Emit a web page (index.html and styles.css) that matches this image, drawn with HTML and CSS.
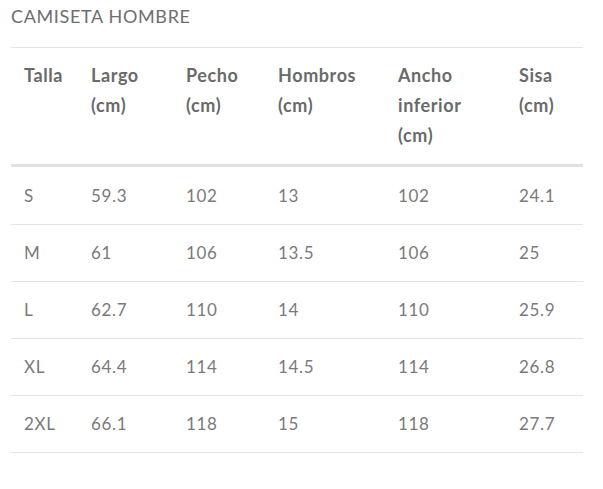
FILE: index.html
```html
<!DOCTYPE html>
<html lang="es">
<head>
<meta charset="utf-8">
<title>Camiseta hombre</title>
<link rel="stylesheet" href="styles.css">
</head>
<body>
<div class="sizes">
  <h2 class="sizes-title">CAMISETA HOMBRE</h2>
  <table class="size-table">
    <thead>
      <tr>
        <th class="c1">Talla</th>
        <th class="c2">Largo<br>(cm)</th>
        <th class="c3">Pecho<br>(cm)</th>
        <th class="c4">Hombros<br>(cm)</th>
        <th class="c5">Ancho<br>inferior<br>(cm)</th>
        <th class="c6">Sisa<br>(cm)</th>
      </tr>
    </thead>
    <tbody>
      <tr><td>S</td><td>59.3</td><td>102</td><td>13</td><td>102</td><td>24.1</td></tr>
      <tr><td>M</td><td>61</td><td>106</td><td>13.5</td><td>106</td><td>25</td></tr>
      <tr><td>L</td><td>62.7</td><td>110</td><td>14</td><td>110</td><td>25.9</td></tr>
      <tr><td>XL</td><td>64.4</td><td>114</td><td>14.5</td><td>114</td><td>26.8</td></tr>
      <tr><td>2XL</td><td>66.1</td><td>118</td><td>15</td><td>118</td><td>27.7</td></tr>
    </tbody>
  </table>
</div>
</body>
</html>
```

FILE: styles.css
```css
html, body {
  margin: 0;
  padding: 0;
  background: #ffffff;
}

body {
  font-family: "Lato", "Nunito Sans", "Liberation Sans", sans-serif;
  color: #777777;
}

.sizes {
  padding: 4px 20px 0 11px;
}

.sizes-title {
  margin: 0 0 19px 0;
  font-size: 18px;
  line-height: 24px;
  font-weight: 400;
  color: #6e6e6e;
  letter-spacing: 0.65px;
}

.size-table {
  width: 572px;
  border-collapse: collapse;
  table-layout: fixed;
  border-top: 1px solid #e5e5e5;
}

.size-table th {
  text-align: left;
  vertical-align: top;
  font-size: 18px;
  font-weight: 700;
  line-height: 30px;
  color: #6a6a6a;
  letter-spacing: 0.6px;
  padding: 12px 13px 14px 13px;
  border-bottom: 3px solid #e1e1e1;
}

.size-table td {
  text-align: left;
  font-size: 17px;
  font-weight: 400;
  line-height: 30px;
  color: #7a7a7a;
  letter-spacing: 0.7px;
  padding: 13px 13px 13px 13px;
  border-bottom: 1px solid #e5e5e5;
}

.size-table tbody tr:first-child td {
  padding-top: 14px;
}

.c1 { width: 67px; }
.c2 { width: 95px; }
.c3 { width: 92px; }
.c4 { width: 120px; }
.c5 { width: 121px; }
.c6 { width: 77px; }

.size-table th,
.size-table td {
  box-sizing: border-box;
}
```
